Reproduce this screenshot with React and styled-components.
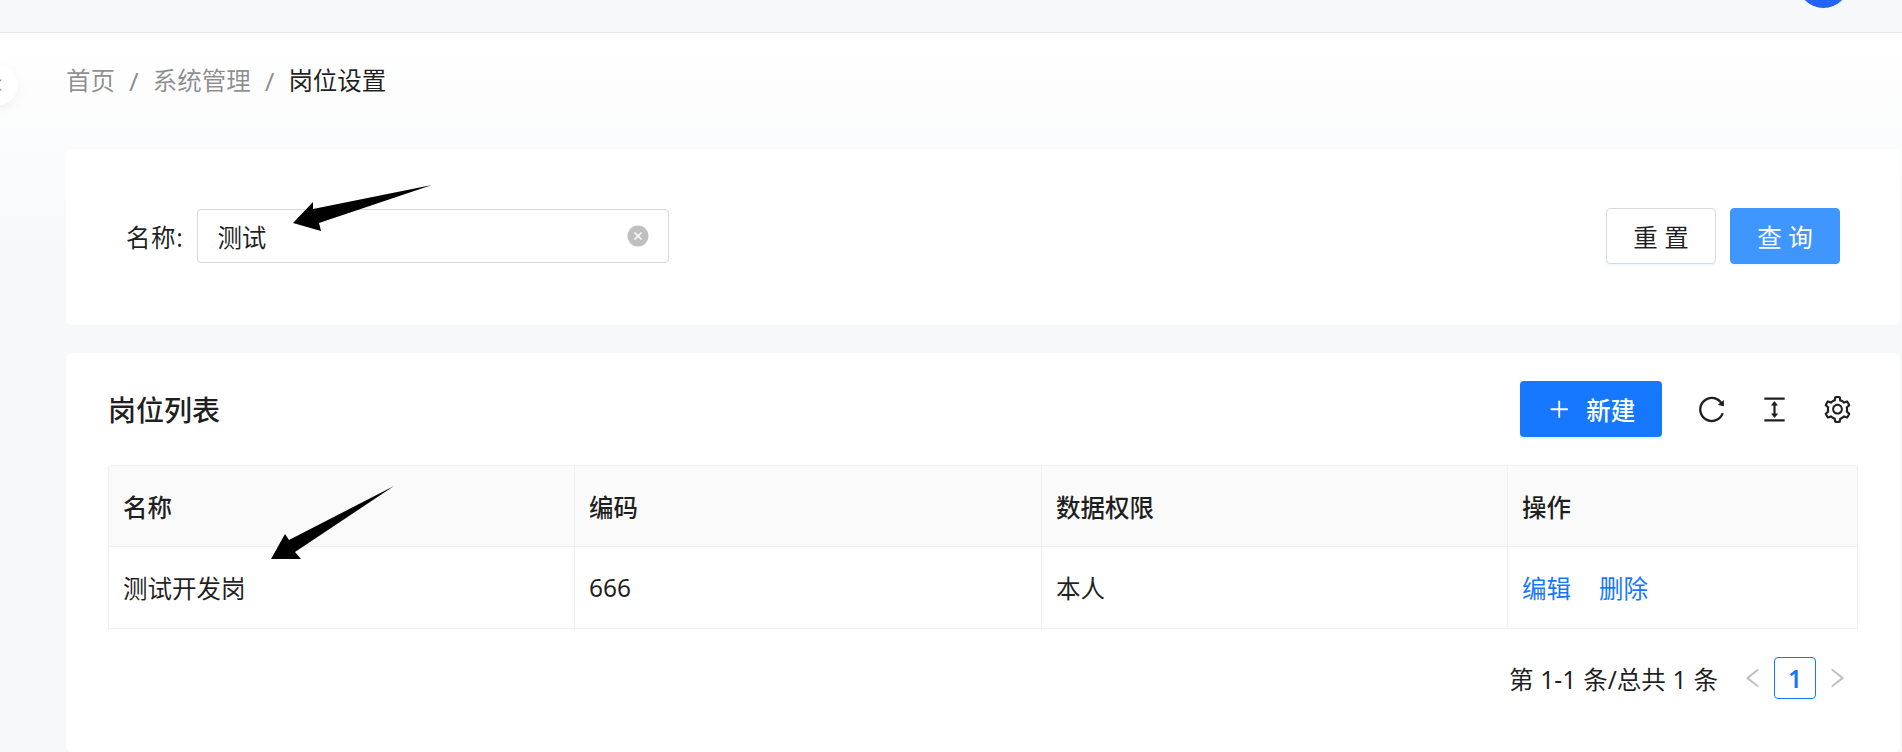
import styled, { createGlobalStyle } from "styled-components";
import {
  AiOutlineReload,
  AiOutlineColumnHeight,
  AiOutlineSetting,
  AiOutlinePlus,
  AiOutlineLeft,
  AiOutlineRight,
  AiFillCloseCircle,
} from "react-icons/ai";

const GlobalStyle = createGlobalStyle`
  html, body {
    margin: 0;
    padding: 0;
    background: #f7f8fa;
  }
  body {
    font-family: "Noto Sans", "Noto Sans CJK SC", sans-serif;
    font-size: 24.5px;
    color: rgba(0, 0, 0, 0.88);
  }
`;

const Page = styled.div`
  position: relative;
  width: 1902px;
  height: 752px;
  overflow: hidden;
  background: #f7f8fa;
`;

const Header = styled.header`
  height: 32px;
  box-sizing: content-box;
  border-bottom: 1px solid #e6e7e9;
  background: #f7f8fa;
  display: flex;
  justify-content: flex-end;
  overflow: hidden;
  padding-right: 52px;
`;

const Avatar = styled.div`
  width: 53px;
  height: 53px;
  margin-top: -44px;
  flex: none;
  border-radius: 50%;
  background: #2264f5;
  border: 1px solid #fff;
  box-sizing: border-box;
`;

const Main = styled.main`
  padding: 0 2px 0 66px;
  height: 719px;
  background: linear-gradient(180deg, #ffffff 0%, #f7f8fa 220px);
  display: flex;
  flex-direction: column;
`;

const Collapse = styled.div`
  position: absolute;
  left: -22px;
  top: 65px;
  width: 40px;
  height: 40px;
  border-radius: 50%;
  background: #fff;
  box-shadow: 0 4px 12px rgba(0, 0, 0, 0.05);
  display: flex;
  align-items: center;
  justify-content: flex-end;
  padding-right: 12px;
  box-sizing: border-box;
  font-size: 16px;
  color: #8c8c8c;
`;

const Breadcrumb = styled.nav`
  height: 116px;
  box-sizing: border-box;
  padding-top: 30px;
  display: flex;
  align-items: flex-start;
  line-height: 36px;
  color: rgba(0, 0, 0, 0.45);
`;

const Sep = styled.span`
  margin: 0 14px;
  font-size: 26px;
`;

const Current = styled.span`
  color: rgba(0, 0, 0, 0.88);
`;

const Card = styled.section`
  background: #fff;
  border-radius: 6px;
`;

const SearchCard = styled(Card)`
  height: 176px;
  display: flex;
  align-items: center;
  justify-content: space-between;
  padding: 0 60px 0 60px;
  margin-bottom: 28px;
  flex: none;
`;

const Field = styled.div`
  display: flex;
  align-items: center;
  margin-top: -2px;
`;

const Label = styled.label`
  margin-right: 14px;
  letter-spacing: 0.6px;
`;

const InputBox = styled.div`
  width: 472px;
  height: 54px;
  box-sizing: border-box;
  border: 1px solid #d9d9d9;
  border-radius: 4px;
  display: flex;
  align-items: center;
  justify-content: space-between;
  padding: 0 18px 0 19px;
`;

const ClearIcon = styled(AiFillCloseCircle)`
  color: #bfbfbf;
  font-size: 24px;
`;

const Actions = styled.div`
  display: flex;
  gap: 14px;
  margin-top: -2px;
`;

const Button = styled.button`
  width: 110px;
  height: 56px;
  border-radius: 4px;
  font: inherit;
  cursor: pointer;
  border: 1px solid ${({ $primary }) => ($primary ? "#4096ff" : "#d9d9d9")};
  background: ${({ $primary }) => ($primary ? "#4096ff" : "#fff")};
  color: ${({ $primary }) => ($primary ? "#fff" : "rgba(0,0,0,0.88)")};
  box-shadow: 0 2px 0 rgba(5, 145, 255, 0.06);
`;

const TableCard = styled(Card)`
  flex: 1;
  padding: 28px 42px 0 42px;
`;

const Toolbar = styled.div`
  height: 56px;
  margin-bottom: 28px;
  display: flex;
  align-items: center;
  justify-content: space-between;
`;

const Title = styled.h2`
  margin: 0;
  font-size: 28px;
  font-weight: 500;
`;

const Tools = styled.div`
  display: flex;
  align-items: center;
`;

const NewButton = styled.button`
  width: 142px;
  height: 56px;
  margin-right: 34px;
  border: none;
  border-radius: 4px;
  background: #1677ff;
  color: #fff;
  font: inherit;
  font-weight: 500;
  display: flex;
  align-items: center;
  justify-content: center;
  gap: 15px;
  box-shadow: 0 2px 0 rgba(5, 145, 255, 0.1);
`;

const ToolIcon = styled.span`
  display: flex;
  font-size: 31px;
  color: rgba(0, 0, 0, 0.88);
  margin-right: 32px;
  &:last-child {
    margin-right: 5px;
  }
`;

const Table = styled.table`
  width: 1750px;
  table-layout: fixed;
  border-collapse: separate;
  border-spacing: 0;
  border: 1px solid #f0f0f0;
  border-right: none;
  border-bottom: none;
  border-radius: 4px 4px 0 0;
`;

const Th = styled.th`
  height: 81px;
  padding: 0 14px;
  box-sizing: border-box;
  background: #fafafa;
  text-align: left;
  font-weight: 500;
  border-right: 1px solid #f0f0f0;
  border-bottom: 1px solid #f0f0f0;
`;

const Td = styled.td`
  height: 82px;
  padding: 0 14px;
  box-sizing: border-box;
  border-right: 1px solid #f0f0f0;
  border-bottom: 1px solid #f0f0f0;
`;

const Link = styled.a`
  color: #1677ff;
  margin-right: 28px;
`;

const Pager = styled.div`
  height: 42px;
  margin-top: 28px;
  display: flex;
  align-items: center;
  justify-content: flex-end;
  padding-right: 8px;
`;

const Total = styled.span`
  margin-right: 22px;
  word-spacing: 0.5px;
`;

const Arrow = styled.span`
  display: flex;
  font-size: 26px;
  color: rgba(0, 0, 0, 0.25);
`;

const PageNo = styled.span`
  width: 42px;
  height: 42px;
  margin: 0 8px;
  box-sizing: border-box;
  border: 1px solid #1677ff;
  border-radius: 4px;
  color: #1677ff;
  font-weight: 600;
  display: flex;
  align-items: center;
  justify-content: center;
`;

const Pointer = styled.svg`
  position: absolute;
  left: 0;
  top: 0;
  pointer-events: none;
`;

const App = () => {
  return (
    <Page>
      <GlobalStyle />
      <Header>
        <Avatar />
      </Header>
      <Collapse>
        <AiOutlineLeft />
      </Collapse>
      <Main>
        <Breadcrumb>
          <span>首页</span>
          <Sep>/</Sep>
          <span>系统管理</span>
          <Sep>/</Sep>
          <Current>岗位设置</Current>
        </Breadcrumb>
        <SearchCard>
          <Field>
            <Label>名称:</Label>
            <InputBox>
              <span>测试</span>
              <ClearIcon />
            </InputBox>
          </Field>
          <Actions>
            <Button>重 置</Button>
            <Button $primary>查 询</Button>
          </Actions>
        </SearchCard>
        <TableCard>
          <Toolbar>
            <Title>岗位列表</Title>
            <Tools>
              <NewButton>
                <AiOutlinePlus />
                新建
              </NewButton>
              <ToolIcon>
                <AiOutlineReload />
              </ToolIcon>
              <ToolIcon>
                <AiOutlineColumnHeight />
              </ToolIcon>
              <ToolIcon>
                <AiOutlineSetting />
              </ToolIcon>
            </Tools>
          </Toolbar>
          <Table>
            <colgroup>
              <col style={{ width: 466 }} />
              <col style={{ width: 467 }} />
              <col style={{ width: 466 }} />
              <col />
            </colgroup>
            <thead>
              <tr>
                <Th>名称</Th>
                <Th>编码</Th>
                <Th>数据权限</Th>
                <Th>操作</Th>
              </tr>
            </thead>
            <tbody>
              <tr>
                <Td>测试开发岗</Td>
                <Td>666</Td>
                <Td>本人</Td>
                <Td>
                  <Link>编辑</Link>
                  <Link>删除</Link>
                </Td>
              </tr>
            </tbody>
          </Table>
          <Pager>
            <Total>第 1-1 条/总共 1 条</Total>
            <Arrow>
              <AiOutlineLeft />
            </Arrow>
            <PageNo>1</PageNo>
            <Arrow>
              <AiOutlineRight />
            </Arrow>
          </Pager>
        </TableCard>
      </Main>
      <Pointer width="1902" height="752" viewBox="0 0 1902 752">
        <polygon points="432,185 313,209 313,202 293,223 321,231 319,223" fill="#000" />
        <polygon points="394,486 289,540 285,534 271,559 301,559 295,552" fill="#000" />
      </Pointer>
    </Page>
  );
};

export default App;
